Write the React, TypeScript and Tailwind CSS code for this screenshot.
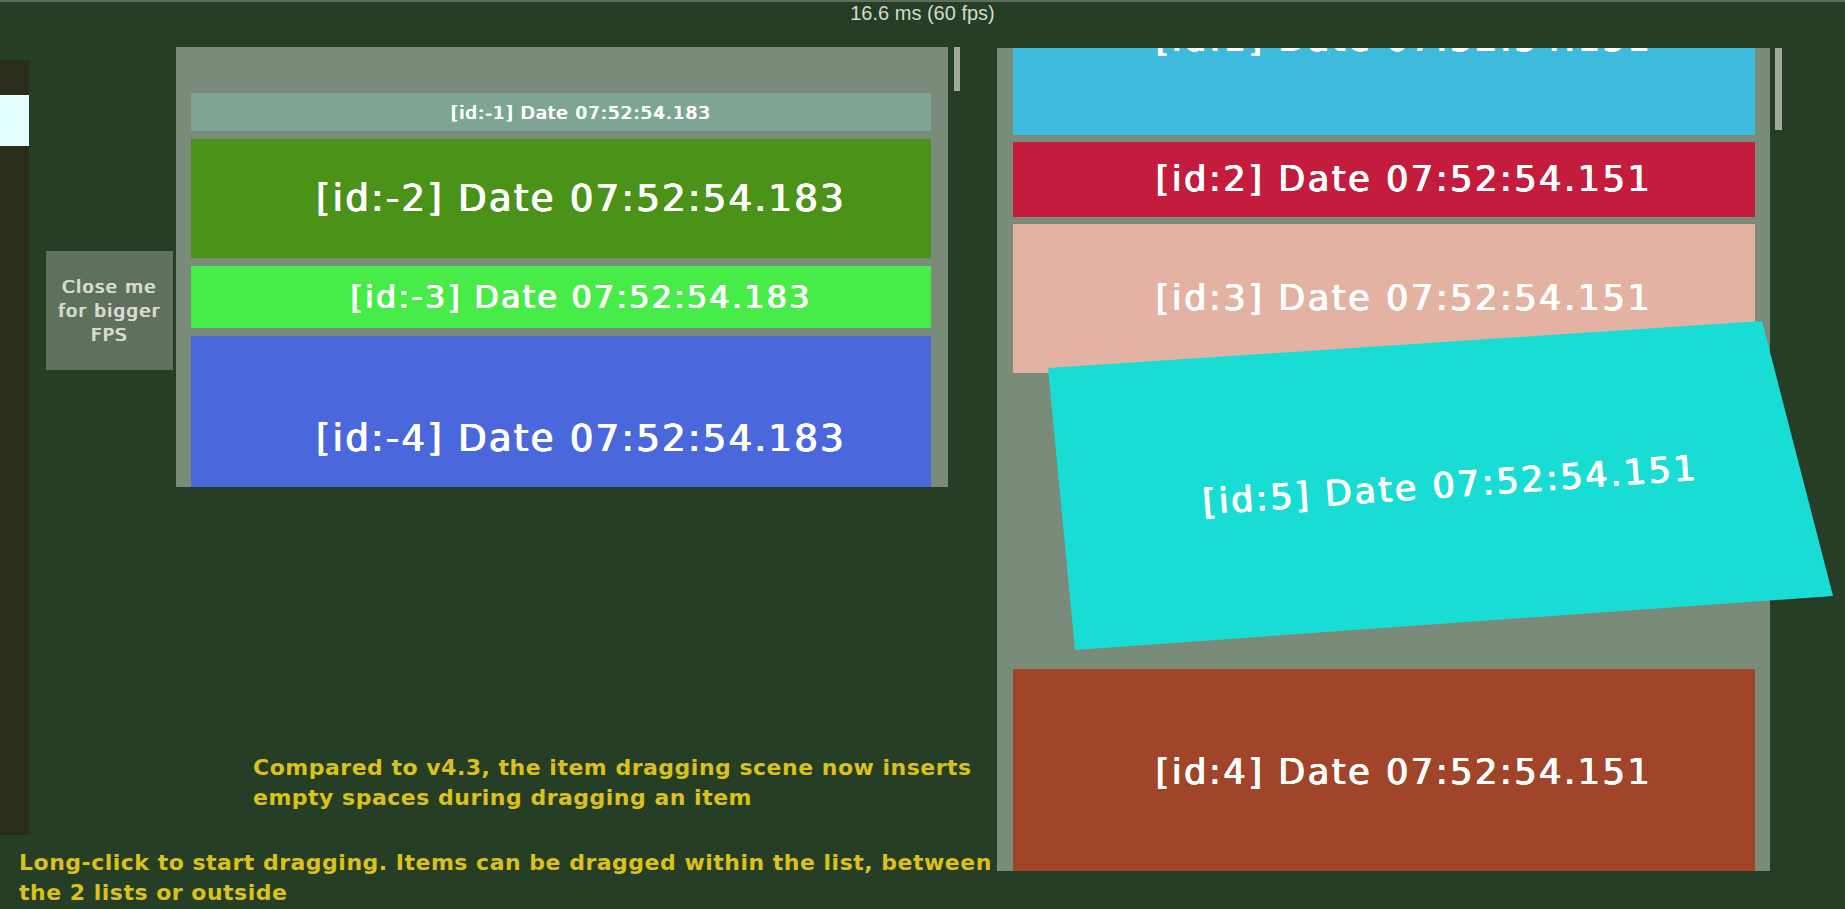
import React from "react";

type Item = { id: number; label: string; h: number; bg: string; size: string };

const unity = { fontFamily: '"DejaVu Sans", "Liberation Sans", sans-serif' };

// fake a medium weight: DejaVu only ships book and bold
const MED = "[text-shadow:0.6px_0_0_currentColor,-0.6px_0_0_currentColor,0_0.4px_0_currentColor]";

const leftItems: Item[] = [
  { id: -1, label: "[id:-1] Date 07:52:54.183", h: 38, bg: "bg-[#7ea593]", size: "text-[18px] tracking-[1.2px]" },
  { id: -2, label: "[id:-2] Date 07:52:54.183", h: 119, bg: "bg-[#4b9318]", size: "text-[37px] tracking-[2.3px]" },
  { id: -3, label: "[id:-3] Date 07:52:54.183", h: 62, bg: "bg-[#48ec48]", size: "text-[32px] tracking-[2.1px]" },
  { id: -4, label: "[id:-4] Date 07:52:54.183", h: 206, bg: "bg-[#4a68dc]", size: "text-[37px] tracking-[2.3px]" },
];

const BIG = "text-[35px] tracking-[2.6px]";

function Row({ item }: { item: Item }) {
  return (
    <div
      className={`flex shrink-0 items-center justify-center pl-[40px] text-white whitespace-nowrap ${MED} ${item.bg} ${item.size}`}
      style={{ height: item.h }}
    >
      {item.label}
    </div>
  );
}

function Scrollbar({ h, w }: { h: number; w: string }) {
  return <div className={`${w} shrink-0 bg-[#a1ab99]`} style={{ height: h }} />;
}

export default function App() {
  return (
    <div className="relative flex h-[909px] w-[1845px] flex-col overflow-hidden border-t-2 border-[#5e6d5c] bg-[#263d26]" style={unity}>
      {/* fps counter */}
      <div className="flex h-[45px] justify-center">
        <span className="text-[20px] leading-[22px] text-[#d2dbcf]" style={{ fontFamily: '"Liberation Sans", Arial, sans-serif' }}>
          16.6 ms (60 fps)
        </span>
      </div>

      <div className="flex">
        {/* left side */}
        <div className="flex w-[997px] shrink-0 flex-col">
          <div className="flex h-[801px]">
            <div className="mt-[13px] h-[775px] w-[29px] shrink-0 bg-[#2a2d1c] pt-[35px]">
              <div className="h-[51px] bg-[#e0fffd]" />
            </div>

            <div className={`ml-[17px] mt-[204px] flex h-[119px] w-[127px] shrink-0 items-center justify-center bg-[#5f705d] text-center text-[18px] leading-[24px] tracking-[1.4px] text-[#d5dacd] ${MED}`}>
              Close me
              <br />
              for bigger
              <br />
              FPS
            </div>

            <div className="ml-[3px] flex w-[772px] shrink-0 flex-col">
              <div className="flex h-[440px] flex-col gap-[8px] overflow-hidden bg-[#7b8b79] pl-[15px] pr-[17px] pt-[46px]">
                {leftItems.map((it) => (
                  <Row key={it.id} item={it} />
                ))}
              </div>
              <p className="ml-[77px] mt-[266px] whitespace-nowrap text-[22px] font-bold leading-[30px] tracking-[0.5px] text-[#d9c21a]">
                Compared to v4.3, the item dragging scene now inserts
                <br />
                empty spaces during dragging an item
              </p>
            </div>

            <div className="ml-[6px]">
              <Scrollbar h={44} w="w-[6px]" />
            </div>
          </div>

          <p className="pl-[19px] whitespace-nowrap text-[22px] font-bold leading-[30px] tracking-[0.5px] text-[#d9c21a]">
            Long-click to start dragging. Items can be dragged within the list, between
            <br />
            the 2 lists or outside
          </p>
        </div>

        {/* right list */}
        <div className="mt-[1px] flex">
          <div className="h-[823px] w-[773px] shrink-0 overflow-hidden bg-[#7b8b79] pl-[16px] pr-[15px]">
            <div className="-mt-[105px] flex flex-col gap-[7px]">
              <Row item={{ id: 1, label: "[id:1] Date 07:52:54.151", h: 192, bg: "bg-[#3dbadc]", size: BIG }} />
              <Row item={{ id: 2, label: "[id:2] Date 07:52:54.151", h: 75, bg: "bg-[#c41c3c]", size: BIG }} />
              <Row item={{ id: 3, label: "[id:3] Date 07:52:54.151", h: 149, bg: "bg-[#e3b2a3]", size: BIG }} />
              <div className="h-[282px] shrink-0" />
              <Row item={{ id: 4, label: "[id:4] Date 07:52:54.151", h: 206, bg: "bg-[#a0442a]", size: BIG }} />
            </div>
          </div>
          <div className="ml-[5px]">
            <Scrollbar h={82} w="w-[7px]" />
          </div>
        </div>
      </div>

      {/* item being dragged */}
      <div
        className="absolute left-[1048px] top-[319px] flex h-[329px] w-[785px] items-center justify-center bg-[#19ddd5] pl-[20px]"
        style={{ clipPath: "polygon(0px 47px, 714px 0px, 785px 275px, 27px 329px)" }}
      >
        <span className={`-rotate-[4deg] whitespace-nowrap text-white ${MED} ${BIG}`}>[id:5] Date 07:52:54.151</span>
      </div>
    </div>
  );
}
